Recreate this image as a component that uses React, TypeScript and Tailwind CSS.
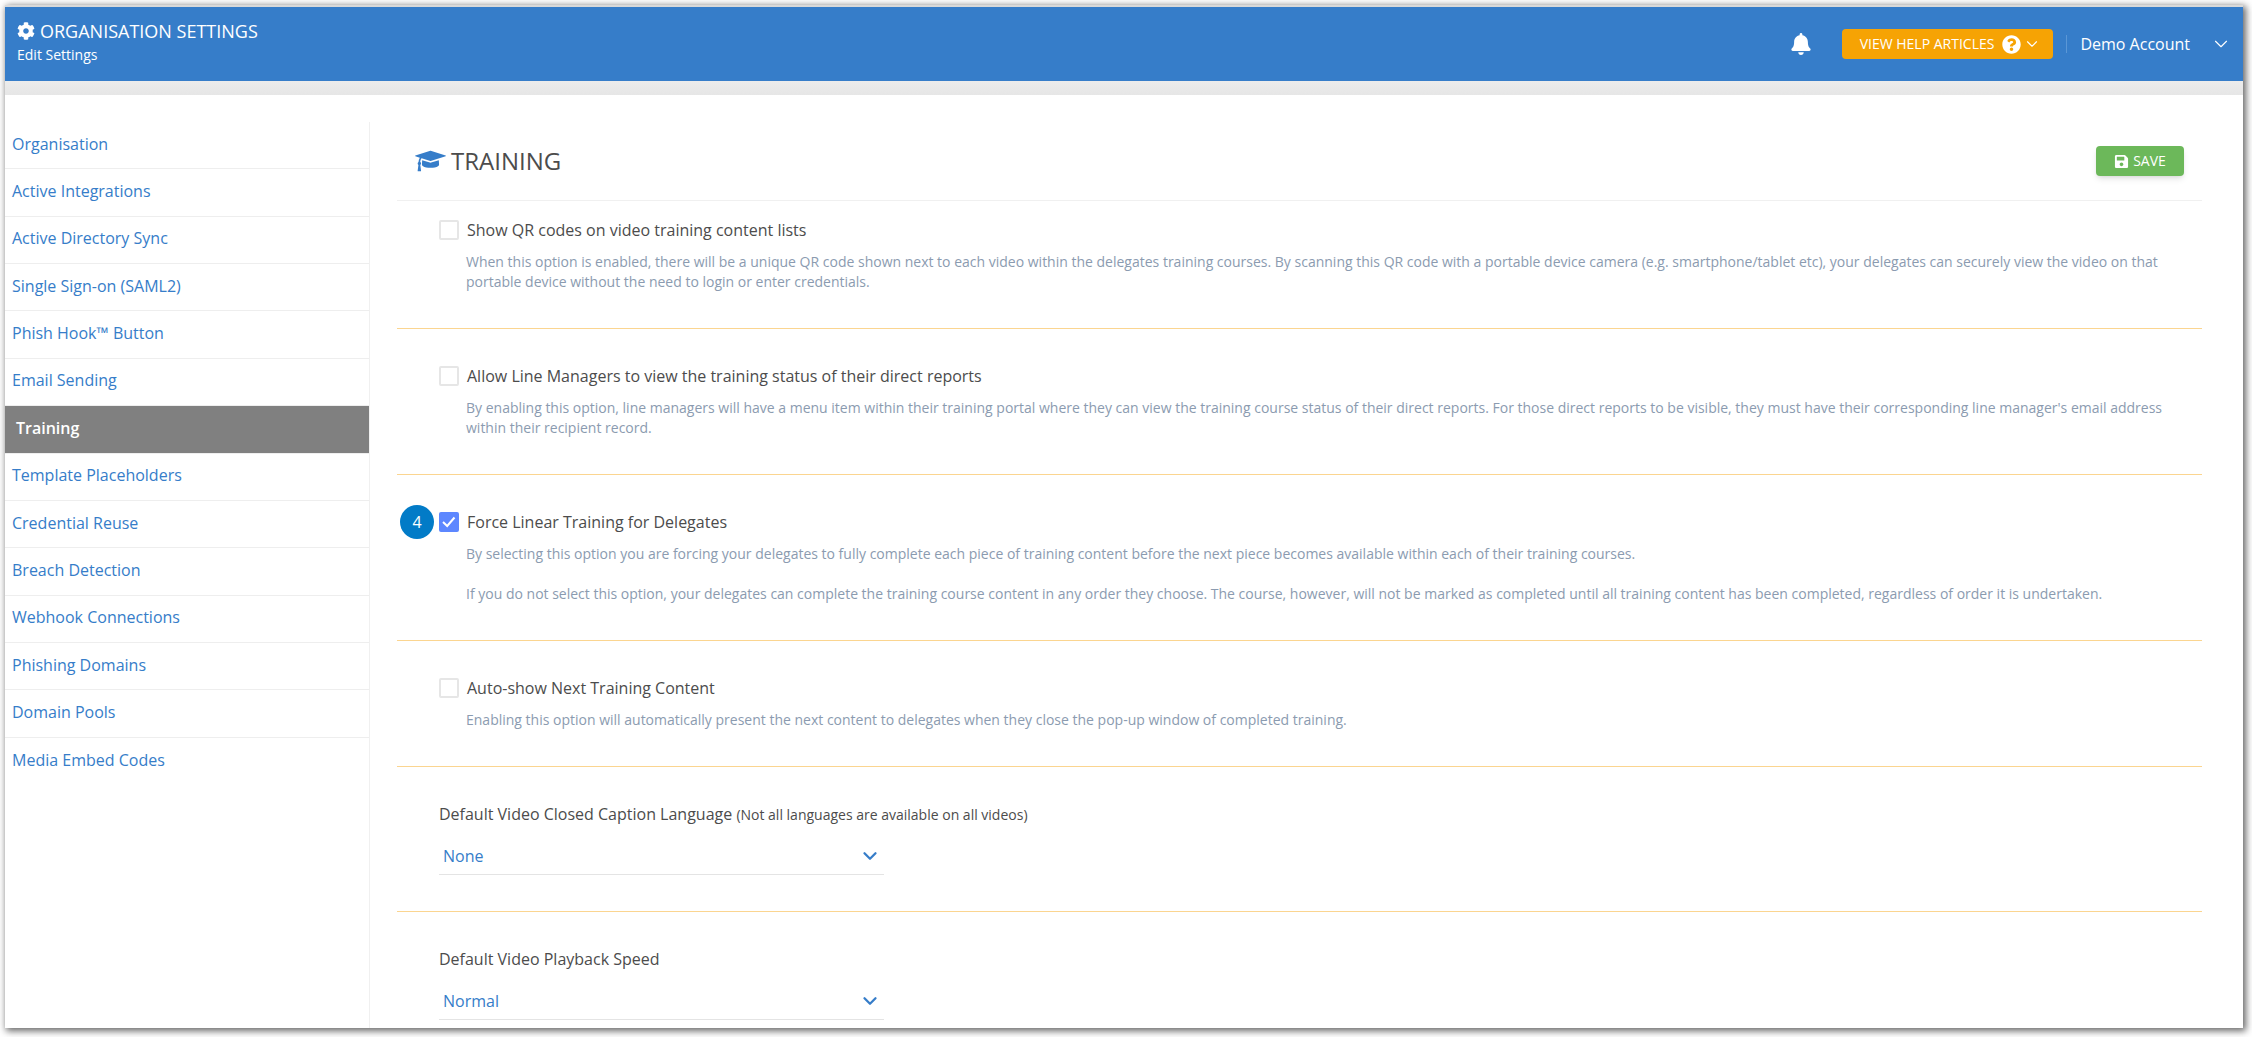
import { useState } from "react";
import type { ReactNode } from "react";
import { FaBell, FaCog, FaQuestionCircle, FaSave } from "react-icons/fa";
import { ChevronDown } from "lucide-react";

const NAV_ITEMS = [
  "Organisation",
  "Active Integrations",
  "Active Directory Sync",
  "Single Sign-on (SAML2)",
  "Phish Hook™ Button",
  "Email Sending",
  "Training",
  "Template Placeholders",
  "Credential Reuse",
  "Breach Detection",
  "Webhook Connections",
  "Phishing Domains",
  "Domain Pools",
  "Media Embed Codes",
];

const GraduationCapIcon = () => (
  <svg
    viewBox="0 0 2304 1792"
    className="h-6 w-[31px] text-[#367dc9]"
    fill="currentColor"
    aria-hidden="true"
  >
    <path d="M1774 836l18 316q4 69-82 128t-235 93.5-323 34.5-323-34.5-235-93.5-82-128l18-316 574 181q22 7 48 7t48-7zm530-324q0 23-22 31l-1120 352q-4 1-10 1t-10-1l-652-206q-43 34-71 111.5t-34 178.5q63 36 63 109 0 69-58 107l58 433q2 14-8 25-9 11-24 11h-192q-15 0-24-11-10-11-8-25l58-433q-58-38-58-107 0-73 65-111 11-207 98-330l-333-104q-22-8-22-31t22-31l1120-352q4-1 10-1t10 1l1120 352q22 8 22 31z" />
  </svg>
);

const Header = () => (
  <header className="flex h-[76px] items-start justify-between border-t-2 border-[#d9d9d9] bg-[#367dc9] pr-[11px] pl-3 text-white">
    <div className="pt-3">
      <h1 className="flex items-center gap-[5px] text-[18px] leading-6 font-medium">
        <FaCog size={18} />
        ORGANISATION SETTINGS
      </h1>
      <p className="text-sm leading-6 font-medium">Edit Settings</p>
    </div>
    <div className="flex items-center pt-[22px]">
      <button type="button" aria-label="Notifications" className="mr-[30px]">
        <FaBell size={22} />
      </button>
      <button
        type="button"
        className="flex h-[30px] items-center rounded bg-[#f6a304] pr-3 pl-[18px] text-sm"
      >
        VIEW HELP ARTICLES
        <FaQuestionCircle size={19} className="ml-2" />
        <ChevronDown size={18} strokeWidth={1.5} className="ml-0.5" />
      </button>
      <span className="mx-[13px] h-[18px] w-px bg-[#5b97d6]" />
      <button type="button" className="flex items-center text-base font-medium">
        Demo Account
        <ChevronDown size={22} strokeWidth={1.25} className="ml-5" />
      </button>
    </div>
  </header>
);

const Sidebar = () => (
  <nav className="w-[365px] shrink-0 border-r border-[#f0f0f0]">
    <ul className="grid h-[663px] auto-rows-fr">
      {NAV_ITEMS.map((item) => {
        const active = item === "Training";
        return (
          <li key={item} className="border-b border-[#eeeeee] last:border-b-0">
            <a
              href="#"
              aria-current={active ? "page" : undefined}
              className={`flex h-full items-center pb-[3px] text-base leading-6 ${
                active
                  ? "bg-[#808080] pl-[11px] font-semibold text-white"
                  : "pl-[7px] text-[#367dc9]"
              }`}
            >
              {item}
            </a>
          </li>
        );
      })}
    </ul>
  </nav>
);

interface OptionProps {
  id: string;
  label: string;
  step?: number;
  first?: boolean;
  defaultChecked?: boolean;
  children: ReactNode;
}

const Option = ({
  id,
  label,
  step,
  first,
  defaultChecked = false,
  children,
}: OptionProps) => {
  const [checked, setChecked] = useState(defaultChecked);

  return (
    <section
      className={`border-b border-[#fbd590] pr-8 pb-9 pl-[42px] ${first ? "pt-[17px]" : "pt-[35px]"}`}
    >
      <div className="relative flex h-6 items-center gap-2">
        {step && (
          <span className="absolute top-[-5px] left-[-39px] flex size-[34px] items-center justify-center rounded-full bg-[#027bc7] text-base font-medium text-white">
            {step}
          </span>
        )}
        <input
          id={id}
          type="checkbox"
          checked={checked}
          onChange={(e) => setChecked(e.target.checked)}
          className="size-5 appearance-none rounded-[2px] border-2 border-[#e6e6e6] bg-white checked:border-[#5d87ff] checked:bg-[#5d87ff]"
        />
        {checked && (
          <svg
            viewBox="0 0 20 20"
            className="pointer-events-none absolute left-0 size-5"
            fill="none"
            stroke="white"
            strokeWidth="2"
          >
            <path d="M4 10 8.2 14 15.5 5.5" />
          </svg>
        )}
        <label htmlFor={id} className="text-base text-[#4c4c4c]">
          {label}
        </label>
      </div>
      <div className="mt-2.5 pl-[27px] text-sm leading-5 text-[#8b9bb0]">
        {children}
      </div>
    </section>
  );
};

const SelectField = ({
  id,
  label,
  hint,
  options,
}: {
  id: string;
  label: string;
  hint?: string;
  options: string[];
}) => (
  <section className="border-b border-[#fbd590] pt-[35px] pb-9 pl-[42px] last:border-b-0 last:pb-2">
    <label htmlFor={id} className="block text-base leading-6 text-[#4c4c4c]">
      {label} {hint && <span className="text-sm">{hint}</span>}
    </label>
    <div className="relative mt-[13px] w-[445px]">
      <select
        id={id}
        className="h-9 w-full appearance-none border-b border-[#e4e4e4] bg-transparent pb-0.5 pl-1 text-base text-[#367dc9]"
      >
        {options.map((option) => (
          <option key={option}>{option}</option>
        ))}
      </select>
      <ChevronDown
        size={22}
        strokeWidth={2.5}
        className="pointer-events-none absolute top-1.5 right-[3px] text-[#367dc9]"
      />
    </div>
  </section>
);

export default function App() {
  return (
    <div className="flex min-h-screen bg-white pt-[5px] pr-[9px] pb-[9px] pl-[5px] font-['Open_Sans',sans-serif]">
      <div className="flex flex-1 flex-col bg-white shadow-[2px_2px_7px_1px_rgba(0,0,0,0.6)]">
        <Header />
        <div className="h-[14px] bg-linear-to-b from-[#ececec] to-[#e6e6e6]" />
        <div className="flex flex-1 pt-[27px]">
          <Sidebar />
          <main className="min-w-0 flex-1 pr-[41px] pl-[27px]">
            <div className="flex h-[79px] items-center justify-between border-b border-[#f0f0f0] pr-[18px] pl-[18px]">
              <h2 className="flex items-center gap-[5px] text-2xl text-[#4c4c4c]">
                <GraduationCapIcon />
                TRAINING
              </h2>
              <button
                type="button"
                className="flex h-[30px] w-[88px] items-center justify-center gap-1 rounded bg-[#6cb85a] text-sm font-medium text-white shadow-md"
              >
                <FaSave size={15} />
                SAVE
              </button>
            </div>

            <Option id="qr" label="Show QR codes on video training content lists" first>
              When this option is enabled, there will be a unique QR code shown
              next to each video within the delegates training courses. By
              scanning this QR code with a portable device camera (e.g.
              smartphone/tablet etc), your delegates can securely view the video
              on that portable device without the need to login or enter
              credentials.
            </Option>
            <Option
              id="line-managers"
              label="Allow Line Managers to view the training status of their direct reports"
            >
              By enabling this option, line managers will have a menu item
              within their training portal where they can view the training
              course status of their direct reports. For those direct reports to
              be visible, they must have their corresponding line manager's
              email address within their recipient record.
            </Option>
            <Option
              id="linear"
              label="Force Linear Training for Delegates"
              step={4}
              defaultChecked
            >
              <p>
                By selecting this option you are forcing your delegates to fully
                complete each piece of training content before the next piece
                becomes available within each of their training courses.
              </p>
              <p className="mt-5">
                If you do not select this option, your delegates can complete
                the training course content in any order they choose. The
                course, however, will not be marked as completed until all
                training content has been completed, regardless of order it is
                undertaken.
              </p>
            </Option>
            <Option id="auto-show" label="Auto-show Next Training Content">
              Enabling this option will automatically present the next content
              to delegates when they close the pop-up window of completed
              training.
            </Option>
            <SelectField
              id="caption-language"
              label="Default Video Closed Caption Language"
              hint="(Not all languages are available on all videos)"
              options={["None", "English"]}
            />
            <SelectField
              id="playback-speed"
              label="Default Video Playback Speed"
              options={["Normal", "1.25x", "1.5x"]}
            />
          </main>
        </div>
      </div>
    </div>
  );
}
